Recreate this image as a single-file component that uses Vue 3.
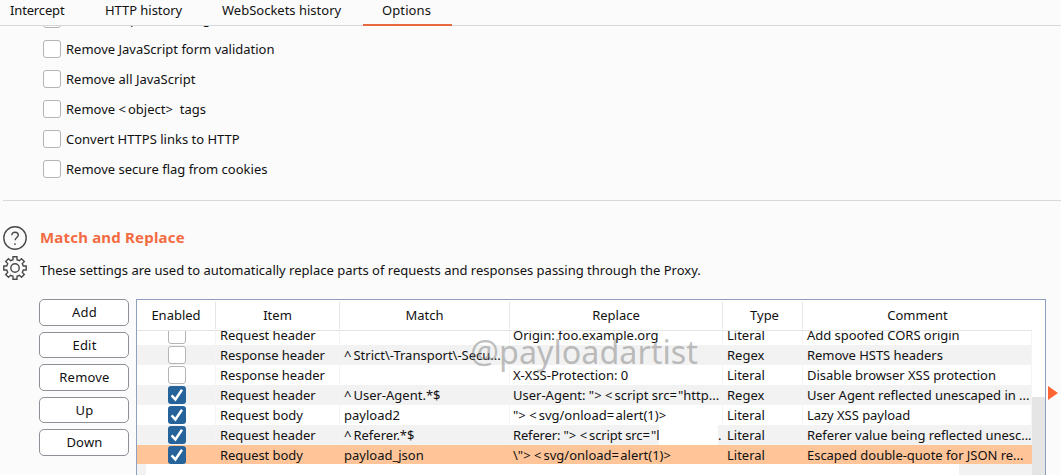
<script setup>
const tabs = [
  { label: 'Intercept', id: 'intercept' },
  { label: 'HTTP history', id: 'http' },
  { label: 'WebSockets history', id: 'sockets' },
  { label: 'Options', id: 'options' },
]
const options = [
  'Remove input field length limits',
  'Remove JavaScript form validation',
  'Remove all JavaScript',
  'Remove <object> tags',
  'Convert HTTPS links to HTTP',
  'Remove secure flag from cookies',
]
const buttons = ['Add', 'Edit', 'Remove', 'Up', 'Down']
const columns = ['Enabled', 'Item', 'Match', 'Replace', 'Type', 'Comment']
const fields = ['item', 'match', 'replace', 'type', 'comment']
const rows = [
  { on: false, cells: ['Request header', '', 'Origin: foo.example.org', 'Literal', 'Add spoofed CORS origin'] },
  { on: false, cells: ['Response header', '^Strict\\-Transport\\-Secu...', '', 'Regex', 'Remove HSTS headers'] },
  { on: false, cells: ['Response header', '', 'X-XSS-Protection: 0', 'Literal', 'Disable browser XSS protection'] },
  { on: true, cells: ['Request header', '^User-Agent.*$', 'User-Agent: "><script src="http...', 'Regex', 'User Agent reflected unescaped in ...'] },
  { on: true, cells: ['Request body', 'payload2', '"><svg/onload=alert(1)>', 'Literal', 'Lazy XSS payload'] },
  { on: true, masked: true, cells: ['Request header', '^Referer.*$', 'Referer: "><script src="l', 'Literal', 'Referer value being reflected unesc...'] },
  { on: true, selected: true, cells: ['Request body', 'payload_json', '\\"><svg/onload=alert(1)>', 'Literal', 'Escaped double-quote for JSON re...'] },
]
// Operator characters are set on a wider advance than the rest of the text.
const split = (s) => s.split(/([<>^=])/).filter(Boolean)
const opClass = (s) => ({ op: /^[<>^=]$/.test(s), gt: s === '>', eq: s === '=' })
</script>

<template>
  <main class="page">
    <nav class="tabs">
      <span v-for="t in tabs" :key="t.id" class="tab" :class="[t.id, { active: t.id === 'options' }]">{{ t.label }}</span>
    </nav>
    <section class="options">
      <div v-for="o in options" :key="o" class="option"><i class="box"></i><span><span v-for="(s, k) in split(o)" :key="k" :class="opClass(s)">{{ s }}</span></span></div>
    </section>
    <section class="rules">
      <div class="icons">
        <svg width="24" height="24" viewBox="0 0 24 24" fill="none" stroke="#4a4a4a" stroke-width="1.4">
          <circle cx="12" cy="12" r="11.2" />
          <path d="M8.8 9.3C8.8 7.4 10 6.3 12 6.3s3.3 1.1 3.3 2.8c0 2.3-3.2 2.5-3.2 5.2" />
          <path d="M12 17.3v1.6" />
        </svg>
        <svg width="24" height="24" viewBox="0 0 24 24" fill="none" stroke="#4a4a4a" stroke-width="1.4">
          <path d="M10 3.7V.8h4v2.9l2.4 1 2.1-2 2.8 2.8-2 2.1 1 2.4h2.9v4h-2.9l-1 2.4 2 2.1-2.8 2.8-2.1-2-2.4 1v2.9h-4v-2.9l-2.4-1-2.1 2-2.8-2.8 2-2.1-1-2.4H.8v-4h2.9l1-2.4-2-2.1 2.8-2.8 2.1 2z" />
          <circle cx="12" cy="12" r="4.2" />
        </svg>
      </div>
      <div class="body">
        <h2>Match and Replace</h2>
        <p>These settings are used to automatically replace parts of requests and responses passing through the Proxy.</p>
        <div class="editor">
          <div class="buttons"><button v-for="b in buttons" :key="b">{{ b }}</button></div>
          <div class="table">
            <div class="grid head"><span v-for="c in columns" :key="c" :class="c.toLowerCase()">{{ c }}</span></div>
            <div class="rows">
              <div v-for="(r, i) in rows" :key="i" class="grid row" :class="{ selected: r.selected, masked: r.masked }">
                <span class="check">
                  <i class="box" :class="{ on: r.on }"><svg v-if="r.on" width="18" height="18" viewBox="0 0 18 18" fill="none" stroke="#fff" stroke-width="2.5"><path d="M3.6 9.4l3.8 4 6.6-9.7" /></svg></i>
                </span>
                <span v-for="(c, j) in r.cells" :key="j" :class="fields[j]"><span v-for="(s, k) in split(c)" :key="k" :class="opClass(s)">{{ s }}</span><b v-if="r.masked && j === 2" class="mask">.</b></span>
              </div>
              <div class="grid row last"><div class="cover"></div></div>
            </div>
            <div class="scroll"></div>
            <div class="watermark">@payloadartist</div>
          </div>
          <svg class="arrow" width="10" height="14" viewBox="0 0 10 14"><path d="M0 0l10 7-10 7z" fill="#ff6633" /></svg>
        </div>
      </div>
    </section>
  </main>
</template>

<style>
body { background: #fbfbfb; overflow: hidden; }
</style>
<style scoped>
* { box-sizing: border-box; }
.page { width: 1061px; height: 475px; overflow: hidden; background: #fbfbfb; color: #111; font: 13px/20px "Noto Sans", "Open Sans", sans-serif; white-space: pre; }
.op { letter-spacing: 2px; }
.op.gt { letter-spacing: 3.5px; }
.op.eq { letter-spacing: 1.2px; }
.tabs { display: flex; height: 26px; border-bottom: 1px solid #d6d8da; }
.tab { height: 26px; line-height: 21px; flex: none; }
.intercept { width: 95px; padding-left: 10px; letter-spacing: -.15px; }
.http { width: 117px; padding-left: 10px; letter-spacing: -.05px; }
.sockets { width: 151px; padding-left: 10px; }
.options.tab { width: 89px; padding-left: 19px; border-bottom: 2px solid #e8683f; letter-spacing: .1px; }
section.options { height: 175px; overflow: hidden; margin-left: 3px; padding-left: 40px; border-bottom: 1px solid #d8d8d8; }
.option { height: 30px; display: flex; align-items: center; gap: 5px; }
.option:first-child { height: 8px; align-items: flex-end; }
.option:first-child > .box { margin-bottom: 6px; }
.option:first-child > span { margin-bottom: 5px; }
.box { display: block; flex: none; width: 18px; height: 18px; border: 1px solid #b4b4b4; border-radius: 3px; background: #fff; }
.rules { display: flex; padding-left: 3px; height: 274px; }
.icons { width: 36px; padding-top: 25px; display: flex; flex-direction: column; gap: 6px; flex: none; }
.body { flex: none; padding-top: 26px; }
h2 { margin: 0 0 0 1px; font-size: 15px; line-height: 20px; font-weight: 700; color: #f26b43; letter-spacing: .19px; }
p { margin: 13px 0 18px 1px; line-height: 20px; }
.editor { display: flex; height: 177px; }
.buttons { width: 90px; margin-right: 7px; display: flex; flex-direction: column; gap: 6px; padding-top: 1px; flex: none; }
button { height: 26.5px; flex: none; border: 1px solid #8f8f98; border-radius: 5px; background: #fff; font: inherit; color: inherit; padding: 0 0 0 1px; line-height: 24px; letter-spacing: .2px; }
.table { position: relative; width: 910px; height: 177px; margin-top: 1px; border: 1px solid #8f9fc0; border-bottom: 0; background: #fff; overflow: hidden; }
.grid { display: grid; grid-template-columns: 79px 124px 170px 213px 80px 229px; width: 895px; }
.head { height: 31px; border-bottom: 1px solid #e4e4e4; text-align: center; }
.head > span { border-right: 1px solid #e6e6e6; margin: 2px 0 1px; line-height: 26px; }
.head > span:last-child { border: 0; }
.head > .type { padding-left: 4px; }
.rows { height: 145px; overflow: hidden; }
.row { height: 20px; line-height: 20px; background: #fff; }
.row:first-child { margin-top: -6px; }
.row:nth-child(even) { background: #f2f2f2; }
.row > span { padding-left: 4px; border-right: 1px solid #f4f4f4; overflow: hidden; }
.row > .check { padding: 1px 0 0 31px; }
.row > .item { letter-spacing: -.07px; }
.row > .replace { padding-left: 3px; position: relative; }
.row > .comment { letter-spacing: -.04px; }
.row.masked > .replace { letter-spacing: -.15px; }
.row.selected { background: #ffc599; height: 19px; }
.row.selected > span { border-color: transparent; }
.box.on { border: 0; background: #26639b; }
.box svg { display: block; }
.mask { position: absolute; left: 149px; top: 0; width: 64px; height: 20px; padding-left: 59px; background: linear-gradient(to right, #fff 59px, transparent 59px); font-weight: 400; }
.cover { margin-left: 9px; width: 813px; background: #fff; height: 20px; }
.scroll { position: absolute; right: 0; top: 97px; width: 13px; bottom: 0; background: #e5e5e5; }
.watermark { position: absolute; left: 333px; top: 29px; font-size: 32.3px; line-height: 44px; color: rgba(130, 130, 130, .5); }
.arrow { margin: 88px 0 0 2px; flex: none; }
</style>
